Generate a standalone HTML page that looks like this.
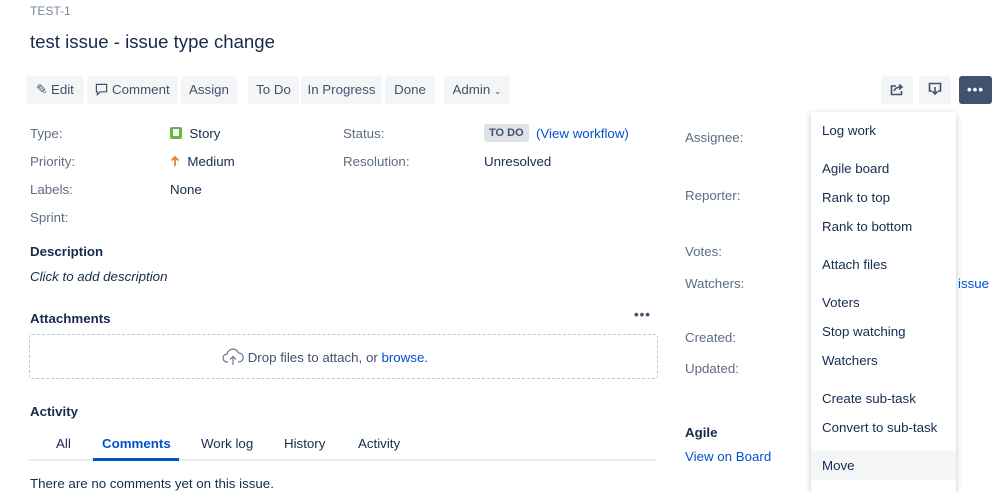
<!DOCTYPE html>
<html><head><meta charset="utf-8"><style>
body{margin:0;width:999px;height:484px;overflow:hidden;background:#fff;font-family:"Liberation Sans",sans-serif;font-size:13.3px;color:#172b4d;position:relative}
.a{position:absolute;white-space:nowrap}
.btn{position:absolute;top:76px;height:28px;line-height:28px;background:#f4f5f7;border-radius:3px;color:#42526e;text-align:center;font-size:13.3px}
.lbl{color:#5e6c84}
.mi{position:absolute;left:822px;color:#172b4d}
a{color:#0052cc;text-decoration:none}
</style></head><body>
<div class="a" style="left:30px;top:4px;color:#7a869a;font-size:12px">TEST-1</div>
<div class="a" style="left:30px;top:31px;font-size:18.6px;color:#172b4d">test issue - issue type change</div>

<div class="btn" style="left:26px;width:58px">✎ Edit</div>
<div class="btn" style="left:87px;width:91px"><svg width="13" height="13" viewBox="0 0 14 14" style="vertical-align:-2px"><path d="M1.5 1.5h11v8h-7l-3 3v-3h-1z" fill="none" stroke="#42526e" stroke-width="1.3"/></svg> Comment</div>
<div class="btn" style="left:181px;width:56px">Assign</div>
<div class="btn" style="left:248px;width:51px">To Do</div>
<div class="btn" style="left:301px;width:81px">In Progress</div>
<div class="btn" style="left:385px;width:50px">Done</div>
<div class="btn" style="left:444px;width:66px">Admin <span style="font-size:9px">⌄</span></div>

<div class="btn" style="left:881px;width:32px"><svg width="14" height="13" viewBox="0 0 14 13" style="vertical-align:-2px"><path d="M6 3H1.5v8.5h10V8" fill="none" stroke="#42526e" stroke-width="1.6"/><path d="M4 8c1-3 4-4 7-4M9 1.5l3 2.5-3 2.5" fill="none" stroke="#42526e" stroke-width="1.6"/></svg></div>
<div class="btn" style="left:919px;width:32px"><svg width="14" height="14" viewBox="0 0 14 14" style="vertical-align:-2px"><path d="M4 9H1.5V1.5h11V9H10" fill="none" stroke="#42526e" stroke-width="1.6"/><path d="M7 5v7M4.5 9.5 7 12l2.5-2.5" fill="none" stroke="#42526e" stroke-width="1.6"/></svg></div>
<div class="btn" style="left:959px;width:33px;background:#42526e;color:#fff;font-weight:bold;letter-spacing:1px">•••</div>

<div class="a lbl" style="left:30px;top:126px">Type:</div>
<div class="a" style="left:170px;top:126px"><span style="display:inline-block;width:12px;height:12px;background:#63ba3c;border-radius:2px;vertical-align:-1px;position:relative"><span style="position:absolute;left:3px;top:2px;width:6px;height:7px;background:#fff"></span></span>&nbsp; Story</div>
<div class="a lbl" style="left:30px;top:154px">Priority:</div>
<div class="a" style="left:170px;top:154px"><svg width="10" height="12" viewBox="0 0 10 12" style="vertical-align:-1px"><path d="M5 11V2M1.5 5.5 5 2l3.5 3.5" fill="none" stroke="#f27b22" stroke-width="1.8"/></svg>&nbsp; Medium</div>
<div class="a lbl" style="left:30px;top:182px">Labels:</div>
<div class="a" style="left:170px;top:182px">None</div>
<div class="a lbl" style="left:30px;top:210px">Sprint:</div>
<div class="a lbl" style="left:343px;top:126px">Status:</div>
<div class="a" style="left:484px;top:124px;background:#dfe1e6;border-radius:3px;font-size:11px;font-weight:bold;padding:3px 5px;color:#42526e">TO DO</div>
<div class="a" style="left:536px;top:126px"><a>(View workflow)</a></div>
<div class="a lbl" style="left:343px;top:154px">Resolution:</div>
<div class="a" style="left:484px;top:154px">Unresolved</div>

<div class="a" style="left:30px;top:244px;font-weight:bold">Description</div>
<div class="a" style="left:30px;top:269px;font-style:italic">Click to add description</div>
<div class="a" style="left:30px;top:311px;font-weight:bold">Attachments</div>
<div class="a" style="left:634px;top:307px;font-weight:bold;letter-spacing:1px;color:#42526e">•••</div>
<div class="a" style="left:29px;top:334px;width:627px;height:43px;border:1px dashed #c1c7d0;border-radius:3px"></div>
<div class="a" style="left:222px;top:348px;color:#42526e"><svg width="22" height="18" viewBox="0 0 22 18" style="vertical-align:-4px"><path d="M6 14H5a4 4 0 0 1 0-8 6 6 0 0 1 11.5-1A4.5 4.5 0 0 1 17 14h-1" fill="none" stroke="#6b778c" stroke-width="1.2"/><path d="M11 17V9M8 11.5 11 8.5l3 3" fill="none" stroke="#6b778c" stroke-width="1.2"/></svg> Drop files to attach, or <a>browse.</a></div>

<div class="a" style="left:30px;top:404px;font-weight:bold">Activity</div>
<div class="a" style="left:29px;top:459px;width:627px;height:2px;background:#ebecf0"></div>
<div class="a" style="left:56px;top:436px">All</div>
<div class="a" style="left:102px;top:436px;color:#0052cc;font-weight:bold">Comments</div>
<div class="a" style="left:93px;top:458px;width:86px;height:3px;background:#0052cc"></div>
<div class="a" style="left:201px;top:436px">Work log</div>
<div class="a" style="left:284px;top:436px">History</div>
<div class="a" style="left:358px;top:436px">Activity</div>
<div class="a" style="left:30px;top:476px">There are no comments yet on this issue.</div>

<div class="a lbl" style="left:685px;top:130px">Assignee:</div>
<div class="a lbl" style="left:685px;top:188px">Reporter:</div>
<div class="a lbl" style="left:685px;top:244px">Votes:</div>
<div class="a lbl" style="left:685px;top:276px">Watchers:</div>
<div class="a lbl" style="left:685px;top:330px">Created:</div>
<div class="a lbl" style="left:685px;top:361px">Updated:</div>
<div class="a" style="left:685px;top:425px;font-weight:bold">Agile</div>
<div class="a" style="left:685px;top:449px"><a>View on Board</a></div>
<div class="a" style="left:958px;top:276px"><a>issue</a></div>

<div class="a" style="left:811px;top:112px;width:145px;height:380px;background:#fff;box-shadow:0 2px 6px rgba(9,30,66,.25)"></div>
<div class="a" style="left:811px;top:451px;width:145px;height:29px;background:#f4f5f7"></div>
<div class="mi a" style="top:123px">Log work</div>
<div class="mi a" style="top:161px">Agile board</div>
<div class="mi a" style="top:190px">Rank to top</div>
<div class="mi a" style="top:219px">Rank to bottom</div>
<div class="mi a" style="top:257px">Attach files</div>
<div class="mi a" style="top:295px">Voters</div>
<div class="mi a" style="top:324px">Stop watching</div>
<div class="mi a" style="top:353px">Watchers</div>
<div class="mi a" style="top:391px">Create sub-task</div>
<div class="mi a" style="top:420px">Convert to sub-task</div>
<div class="mi a" style="top:458px">Move</div>
</body></html>
